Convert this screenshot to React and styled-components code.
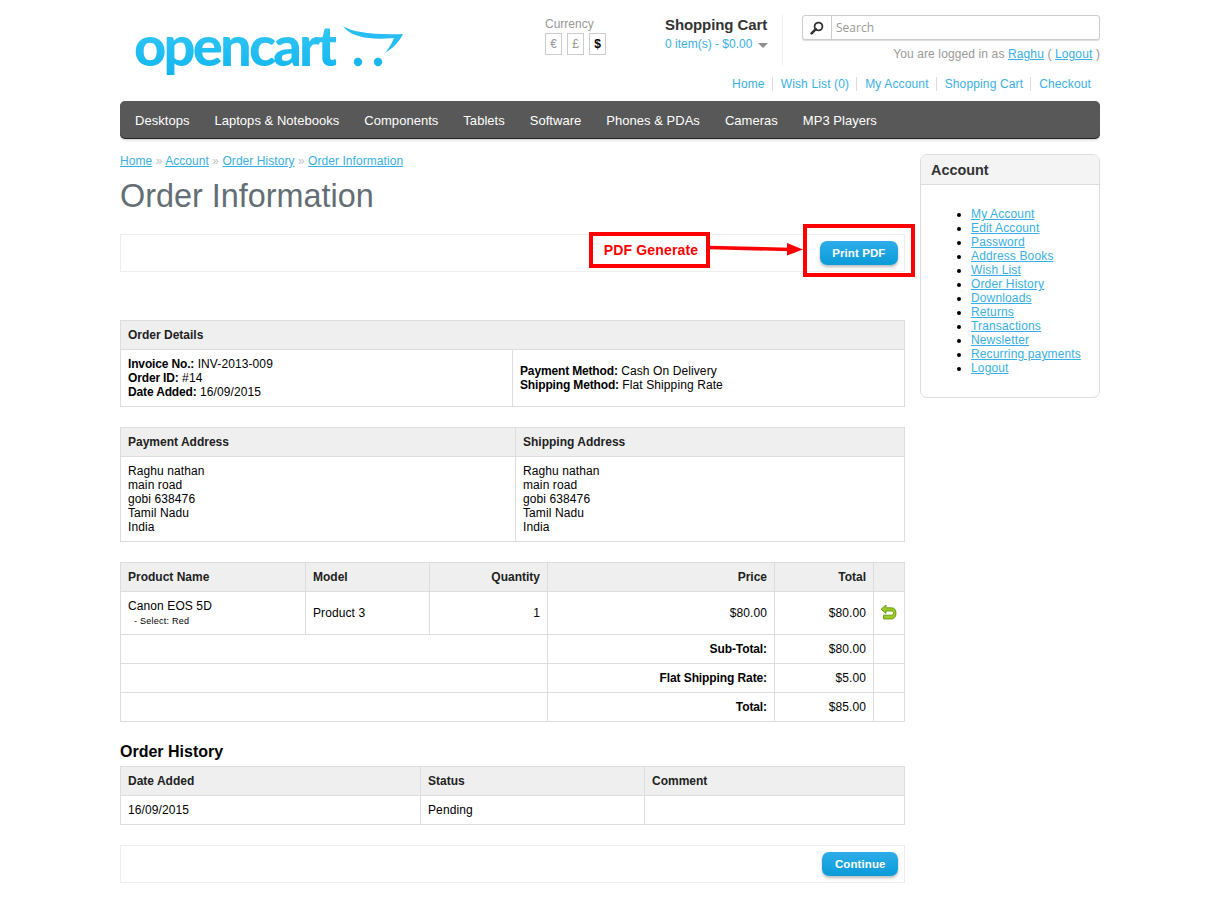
import React from 'react';
import styled, { createGlobalStyle } from 'styled-components';

const GlobalStyle = createGlobalStyle`
  body {
    margin: 0;
    background: #ffffff;
    color: #000000;
    font-family: 'Liberation Sans', Arial, sans-serif;
    font-size: 12px;
  }
`;

const Page = styled.div`
  position: relative;
  width: 980px;
  height: 897px;
  margin-left: 120px;
  overflow: hidden;
`;

const Header = styled.header`
  display: flex;
  height: 66px;
`;

const LogoBox = styled.div`
  display: flex;
  align-items: flex-start;
  width: 425px;
  padding: 13px 0 0 14px;
  box-sizing: border-box;
`;

const LogoText = styled.span`
  font-family: 'Lato', 'Open Sans', sans-serif;
  font-size: 56px;
  font-weight: 900;
  line-height: 64px;
  letter-spacing: -2.8px;
  background: linear-gradient(#3ccbf7, #0fb5ee);
  -webkit-background-clip: text;
  background-clip: text;
  color: transparent;
`;

const CartLogo = styled.svg`
  width: 60px;
  height: 42px;
  margin: 13px 0 0 7px;
`;

const Currency = styled.div`
  width: 120px;
  padding-top: 18px;
  color: #999999;
  font-size: 12px;
  line-height: 13px;
`;

const CurrencyRow = styled.div`
  display: flex;
  gap: 5px;
  margin-top: 2px;
`;

const CurrencyButton = styled.span`
  display: block;
  width: 15px;
  height: 20px;
  border: 1px solid #cccccc;
  text-align: center;
  line-height: 20px;
  font-weight: ${(p) => (p.$active ? 700 : 400)};
  color: ${(p) => (p.$active ? '#000000' : '#999999')};
`;

const Cart = styled.div`
  width: 118px;
  height: 50px;
  margin-top: 15px;
  border-right: 1px solid #eeeeee;
  box-sizing: border-box;
`;

const CartTitle = styled.div`
  font-size: 15px;
  font-weight: 700;
  letter-spacing: -0.1px;
  line-height: 20px;
  color: #333333;
`;

const CartTotal = styled.div`
  display: flex;
  align-items: center;
  margin-top: 1px;
  font-size: 12px;
  line-height: 16px;
  color: #38b0e3;
`;

const Caret = styled.span`
  width: 0;
  height: 0;
  margin: 2px 0 0 6px;
  border-style: solid;
  border-width: 5px 5px 0;
  border-color: #8e8e8e transparent transparent;
`;

const Account = styled.div`
  width: 298px;
  margin-left: 19px;
  padding-top: 15px;
`;

const SearchBox = styled.div`
  display: flex;
  height: 25px;
  border: 1px solid #cccccc;
  border-radius: 3px;
  box-shadow: 0 1px 1px #dddddd;
  box-sizing: border-box;
  background: #ffffff;
`;

const SearchIcon = styled.div`
  display: flex;
  align-items: center;
  justify-content: center;
  width: 28px;
  border-right: 1px solid #cccccc;
`;

const SearchText = styled.span`
  padding-left: 4px;
  font-family: 'Open Sans', sans-serif;
  font-size: 12px;
  line-height: 23px;
  color: #999999;
`;

const Welcome = styled.div`
  margin-top: 7px;
  font-size: 12px;
  letter-spacing: 0.12px;
  line-height: 14px;
  text-align: right;
  color: #999999;
`;

const TextLink = styled.a`
  color: #38b0e3;
  text-decoration: underline;
`;

const TopLinks = styled.div`
  display: flex;
  justify-content: flex-end;
  align-items: flex-start;
  height: 35px;
  padding: 11px 9px 0 0;
  box-sizing: border-box;
`;

const TopLink = styled.a`
  padding: 0 7px 0 8px;
  border-left: 1px solid #dddddd;
  font-size: 12px;
  letter-spacing: 0.14px;
  line-height: 14px;
  color: #38b0e3;

  &:first-child {
    border-left: 0;
  }
  &:last-child {
    padding-right: 0;
  }
`;

const Nav = styled.nav`
  display: flex;
  gap: 25px;
  height: 36px;
  padding: 1px 0 0 15px;
  background: #585858;
  border-radius: 5px;
  box-shadow: 0 1px 0 #222222, 0 2px 3px #cccccc;
  align-items: center;
`;

const NavItem = styled.a`
  font-size: 13px;
  letter-spacing: 0.03px;
  color: #ffffff;
`;

const Main = styled.main`
  display: flex;
  gap: 15px;
  margin-top: 16px;
`;

const Content = styled.div`
  width: 785px;
`;

const Breadcrumb = styled.div`
  font-size: 12px;
  letter-spacing: 0.06px;
  line-height: 14px;
  color: #c4c4c4;
`;

const Title = styled.h1`
  margin: 10px 0 20px;
  font-size: 32.4px;
  font-weight: 400;
  line-height: 36px;
  color: #636e75;
`;

const ButtonBar = styled.div`
  display: flex;
  justify-content: flex-end;
  align-items: center;
  height: 38px;
  margin-bottom: ${(p) => p.$gap || 0}px;
  padding-right: 6px;
  border: 1px solid #eeeeee;
  box-sizing: border-box;
`;

const Button = styled.a`
  display: block;
  padding: 0 12.5px;
  height: 24px;
  border-radius: 7px;
  background: linear-gradient(#2eade9, #0a9bd8);
  box-shadow: 0 2px 3px #bbbbbb;
  font-size: 11.5px;
  font-weight: 700;
  letter-spacing: 0.1px;
  line-height: 24px;
  color: #ffffff;
`;

const Table = styled.table`
  width: 100%;
  margin-bottom: 20px;
  border-collapse: collapse;
  table-layout: fixed;
  font-size: 12px;
  letter-spacing: 0.1px;
  line-height: 14px;

  b {
    letter-spacing: -0.15px;
  }
`;

const Th = styled.th`
  height: 28px;
  padding: 0 7px;
  border: 1px solid #dddddd;
  background: #efefef;
  font-weight: 700;
  letter-spacing: 0;
  color: #222222;
  text-align: ${(p) => p.$align || 'left'};
`;

const Td = styled.td`
  height: ${(p) => p.$height || 28}px;
  padding: 0 7px;
  border: 1px solid #dddddd;
  vertical-align: ${(p) => p.$valign || 'middle'};
  text-align: ${(p) => p.$align || 'left'};
  font-weight: ${(p) => (p.$bold ? 700 : 400)};
  letter-spacing: ${(p) => (p.$bold ? '-0.1px' : '0.1px')};
`;

const Lines = styled.div`
  padding: 7px 0;
`;

const Option = styled.small`
  display: block;
  margin-top: 1px;
  padding-left: 6px;
  font-size: 9px;
  letter-spacing: 0.25px;
  line-height: 14px;
`;

const SubTitle = styled.h2`
  margin: 0 0 4px;
  font-size: 16px;
  font-weight: 700;
  line-height: 20px;
`;

const Sidebar = styled.aside`
  width: 180px;
`;

const Box = styled.section`
  height: 244px;
  border: 1px solid #dddddd;
  border-radius: 7px;
  box-sizing: border-box;
  overflow: hidden;
`;

const BoxHeading = styled.div`
  height: 29px;
  padding-left: 10px;
  border-bottom: 1px solid #dddddd;
  background: #f4f4f4;
  font-size: 14.4px;
  font-weight: 700;
  line-height: 30px;
  color: #333333;
`;

const BoxList = styled.ul`
  margin: 0;
  padding: 22px 0 0 50px;
  font-size: 12px;
  letter-spacing: 0.14px;
  line-height: 14px;
`;

const Annotation = styled.div`
  position: absolute;
  left: ${(p) => p.$left}px;
  top: ${(p) => p.$top}px;
  width: ${(p) => p.$width}px;
  height: ${(p) => p.$height}px;
  padding-left: ${(p) => p.$indent || 0}px;
  border: 4px solid #ff0000;
  box-sizing: border-box;
  background: ${(p) => p.$fill || 'transparent'};
  text-align: center;
  font-size: 14px;
  font-weight: 700;
  letter-spacing: 0.15px;
  line-height: 28px;
  color: #ff0000;
`;

const ArrowSvg = styled.svg`
  position: absolute;
  left: 585px;
  top: 236px;
  width: 100px;
  height: 24px;
`;

const ReturnSvg = styled.svg`
  display: block;
  width: 17px;
  height: 17px;
  margin: -2px 0 0 -1px;
`;

const SearchGlyph = () => (
  <svg width="14" height="14" viewBox="0 0 14 14">
    <circle cx="8.5" cy="5.5" r="3.9" fill="none" stroke="#333" strokeWidth="1.8" />
    <path d="M5.8 8.2 1.6 12.4" stroke="#333" strokeWidth="2.6" strokeLinecap="round" />
  </svg>
);

const ReturnIcon = () => (
  <ReturnSvg viewBox="0 0 17 17">
    <path
      d="M6 1 1 5.2 6 9.5V7h5.2c1.6 0 2.3.8 2.3 2s-.7 2.2-2.3 2.2H3.5V15h8c2.9 0 4.5-2.4 4.5-5.8 0-3.3-1.7-5.4-4.5-5.4H6z"
      fill="#9ccb22"
      stroke="#5c8c10"
      strokeWidth="0.8"
      strokeLinejoin="round"
    />
  </ReturnSvg>
);

const navItems = ['Desktops', 'Laptops & Notebooks', 'Components', 'Tablets', 'Software', 'Phones & PDAs', 'Cameras', 'MP3 Players'];
const topLinks = ['Home', 'Wish List (0)', 'My Account', 'Shopping Cart', 'Checkout'];
const accountLinks = ['My Account', 'Edit Account', 'Password', 'Address Books', 'Wish List', 'Order History', 'Downloads', 'Returns', 'Transactions', 'Newsletter', 'Recurring payments', 'Logout'];
const crumbs = ['Home', 'Account', 'Order History', 'Order Information'];
const address = ['Raghu nathan', 'main road', 'gobi 638476', 'Tamil Nadu', 'India'];
const totals = [['Sub-Total:', '$80.00'], ['Flat Shipping Rate:', '$5.00'], ['Total:', '$85.00']];

const Address = () => (
  <Td $valign="top">
    <Lines>
      {address.map((line) => (
        <div key={line}>{line}</div>
      ))}
    </Lines>
  </Td>
);

const App = () => {
  return (
    <Page>
      <GlobalStyle />
      <Header>
        <LogoBox>
          <LogoText>opencart</LogoText>
          <CartLogo viewBox="0 0 60 42">
            <path d="M0 0C8 6 30 9 60 8 56 16 50 22 42 27 46 22 49 17 51 12 30 14 8 12 0 0Z" fill="#27bdf2" />
            <circle cx="15" cy="36" r="4.2" fill="#1ab6ee" />
            <circle cx="35" cy="36" r="4.2" fill="#1ab6ee" />
          </CartLogo>
        </LogoBox>
        <Currency>
          Currency
          <CurrencyRow>
            <CurrencyButton>€</CurrencyButton>
            <CurrencyButton>£</CurrencyButton>
            <CurrencyButton $active>$</CurrencyButton>
          </CurrencyRow>
        </Currency>
        <Cart>
          <CartTitle>Shopping Cart</CartTitle>
          <CartTotal>
            0 item(s) - $0.00
            <Caret />
          </CartTotal>
        </Cart>
        <Account>
          <SearchBox>
            <SearchIcon>
              <SearchGlyph />
            </SearchIcon>
            <SearchText>Search</SearchText>
          </SearchBox>
          <Welcome>
            You are logged in as <TextLink>Raghu</TextLink> ( <TextLink>Logout</TextLink> )
          </Welcome>
        </Account>
      </Header>
      <TopLinks>
        {topLinks.map((link) => (
          <TopLink key={link}>{link}</TopLink>
        ))}
      </TopLinks>
      <Nav>
        {navItems.map((item) => (
          <NavItem key={item}>{item}</NavItem>
        ))}
      </Nav>
      <Main>
        <Content>
          <Breadcrumb>
            {crumbs.map((crumb, i) => (
              <React.Fragment key={crumb}>
                {i > 0 && ' » '}
                <TextLink>{crumb}</TextLink>
              </React.Fragment>
            ))}
          </Breadcrumb>
          <Title>Order Information</Title>
          <ButtonBar $gap={48}>
            <Button>Print PDF</Button>
          </ButtonBar>
          <Table>
            <colgroup>
              <col style={{ width: 392 }} />
              <col />
            </colgroup>
            <thead>
              <tr>
                <Th colSpan="2">Order Details</Th>
              </tr>
            </thead>
            <tbody>
              <tr>
                <Td>
                  <Lines>
                    <b>Invoice No.:</b> INV-2013-009
                    <br />
                    <b>Order ID:</b> #14
                    <br />
                    <b>Date Added:</b> 16/09/2015
                  </Lines>
                </Td>
                <Td>
                  <b>Payment Method:</b> Cash On Delivery
                  <br />
                  <b>Shipping Method:</b> Flat Shipping Rate
                </Td>
              </tr>
            </tbody>
          </Table>
          <Table>
            <colgroup>
              <col style={{ width: 395 }} />
              <col />
            </colgroup>
            <thead>
              <tr>
                <Th>Payment Address</Th>
                <Th>Shipping Address</Th>
              </tr>
            </thead>
            <tbody>
              <tr>
                <Address />
                <Address />
              </tr>
            </tbody>
          </Table>
          <Table>
            <colgroup>
              <col style={{ width: 185 }} />
              <col style={{ width: 124 }} />
              <col style={{ width: 118 }} />
              <col style={{ width: 227 }} />
              <col style={{ width: 99 }} />
              <col />
            </colgroup>
            <thead>
              <tr>
                <Th>Product Name</Th>
                <Th>Model</Th>
                <Th $align="right">Quantity</Th>
                <Th $align="right">Price</Th>
                <Th $align="right">Total</Th>
                <Th />
              </tr>
            </thead>
            <tbody>
              <tr>
                <Td $height={42}>
                  Canon EOS 5D
                  <Option>- Select: Red</Option>
                </Td>
                <Td>Product 3</Td>
                <Td $align="right">1</Td>
                <Td $align="right">$80.00</Td>
                <Td $align="right">$80.00</Td>
                <Td>
                  <ReturnIcon />
                </Td>
              </tr>
              {totals.map(([label, value]) => (
                <tr key={label}>
                  <Td colSpan="3" />
                  <Td $align="right" $bold>
                    {label}
                  </Td>
                  <Td $align="right">{value}</Td>
                  <Td />
                </tr>
              ))}
            </tbody>
          </Table>
          <SubTitle>Order History</SubTitle>
          <Table>
            <colgroup>
              <col style={{ width: 300 }} />
              <col style={{ width: 224 }} />
              <col />
            </colgroup>
            <thead>
              <tr>
                <Th>Date Added</Th>
                <Th>Status</Th>
                <Th>Comment</Th>
              </tr>
            </thead>
            <tbody>
              <tr>
                <Td>16/09/2015</Td>
                <Td>Pending</Td>
                <Td />
              </tr>
            </tbody>
          </Table>
          <ButtonBar>
            <Button>Continue</Button>
          </ButtonBar>
        </Content>
        <Sidebar>
          <Box>
            <BoxHeading>Account</BoxHeading>
            <BoxList>
              {accountLinks.map((link) => (
                <li key={link}>
                  <TextLink>{link}</TextLink>
                </li>
              ))}
            </BoxList>
          </Box>
        </Sidebar>
      </Main>
      <Annotation $left={683} $top={224} $width={112} $height={53} />
      <Annotation $left={469} $top={232} $width={121} $height={36} $fill="#ffffff" $indent={3}>
        PDF Generate
      </Annotation>
      <ArrowSvg viewBox="0 0 100 24">
        <path d="M4 11.5 86 13.5" stroke="#ff0000" strokeWidth="3.6" />
        <path d="M82 7 98 13.5 82 19.5Z" fill="#ff0000" />
      </ArrowSvg>
    </Page>
  );
};

export default App;
